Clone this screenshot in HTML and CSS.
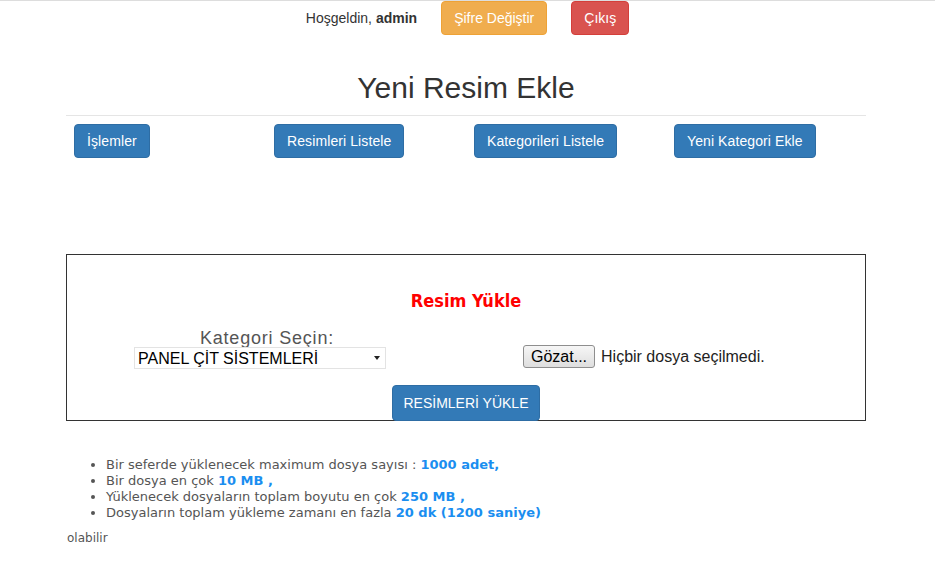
FILE: index.html
```html
<!DOCTYPE html>
<html lang="tr">
<head>
    <meta charset="UTF-8">
    <meta name="viewport" content="width=device-width, initial-scale=1.0">
    <title>Yeni Resim Ekle</title>
    <link rel="stylesheet" href="styles.css">
</head>
<body>
    <div class="top-bar">
        <span class="welcome">Hoşgeldin, <b>admin</b></span>
        <button class="btn btn-warning">Şifre Değiştir</button>
        <button class="btn btn-danger">Çıkış</button>
    </div>

    <div class="container">
        <h2 class="page-title">Yeni Resim Ekle</h2>
        <hr>

        <!-- Menü butonları -->
        <div class="menu-row">
            <div class="menu-col"><button class="btn btn-primary">İşlemler</button></div>
            <div class="menu-col"><button class="btn btn-primary">Resimleri Listele</button></div>
            <div class="menu-col"><button class="btn btn-primary">Kategorileri Listele</button></div>
            <div class="menu-col"><button class="btn btn-primary">Yeni Kategori Ekle</button></div>
        </div>

        <!-- Yükleme formu -->
        <div class="upload-box">
            <div class="upload-title">Resim Yükle</div>
            <div class="upload-row">
                <div class="upload-left">
                    <label for="kategori">Kategori Seçin:</label>
                    <div class="select-wrap">
                        <select id="kategori">
                            <option>PANEL ÇİT SİSTEMLERİ</option>
                            <option>BAHÇE TELLERİ</option>
                        </select>
                    </div>
                </div>
                <div class="upload-right">
                    <button class="file-btn">Gözat...</button>
                    <span class="file-text">Hiçbir dosya seçilmedi.</span>
                </div>
            </div>
            <div class="upload-submit">
                <button class="btn btn-primary">RESİMLERİ YÜKLE</button>
            </div>
        </div>

        <ul class="limits">
            <li>Bir seferde yüklenecek maximum dosya sayısı : <b>1000 adet,</b></li>
            <li>Bir dosya en çok <b>10 MB ,</b></li>
            <li>Yüklenecek dosyaların toplam boyutu en çok <b>250 MB ,</b></li>
            <li>Dosyaların toplam yükleme zamanı en fazla <b>20 dk (1200 saniye)</b></li>
        </ul>
        <p class="note">olabilir</p>
    </div>
</body>
</html>
```

FILE: styles.css
```css
body {
    margin: 0;
    font-family: "Liberation Sans", Arial, sans-serif;
    font-size: 14px;
    color: #333;
    background-color: #fff;
    border-top: 1px solid #ddd;
}
.btn {
    display: inline-block;
    padding: 6px 12px;
    font-family: "Liberation Sans", Arial, sans-serif;
    font-size: 14px;
    line-height: 20px;
    color: #fff;
    border: 1px solid transparent;
    border-radius: 4px;
    cursor: pointer;
}
.btn-primary {
    background-color: #337ab7;
    border-color: #2e6da4;
}
.btn-warning {
    background-color: #f0ad4e;
    border-color: #eea236;
}
.btn-danger {
    background-color: #d9534f;
    border-color: #d43f3a;
}
.top-bar {
    display: flex;
    justify-content: center;
    align-items: center;
    gap: 24px;
}
.welcome {
    margin-top: -1px;
}
.container {
    width: 800px;
    margin-left: 66px;
}
.page-title {
    margin: 35px 0 0;
    font-size: 30px;
    font-weight: 500;
    line-height: 36px;
    text-align: center;
}
hr {
    margin: 9px 0 8px;
    border: 0;
    border-top: 1px solid #e5e5e5;
}
.menu-row {
    display: grid;
    grid-template-columns: repeat(4, 1fr);
}
.menu-col {
    padding: 0 8px;
}
.menu-col .btn {
    letter-spacing: 0.1px;
}
.upload-box {
    margin-top: 96px;
    border: 1px solid #333;
    padding-top: 36px;
    height: 167px;
    box-sizing: border-box;
}
.upload-title {
    text-align: center;
    color: #f00;
    font-family: "DejaVu Sans Condensed", "DejaVu Sans", sans-serif;
    font-weight: bold;
    font-size: 18px;
    line-height: 20px;
}
.upload-row {
    display: grid;
    grid-template-columns: 400px 400px;
    align-items: end;
    margin-top: 19px;
}
.upload-left {
    text-align: center;
    padding-right: 14px;
}
.upload-left label {
    display: block;
    color: #555;
    font-size: 18px;
    letter-spacing: 0.8px;
    line-height: 17px;
    margin-left: 14px;
}
.select-wrap {
    position: relative;
    display: inline-block;
    width: 252px;
}
.select-wrap select {
    width: 100%;
    height: 22px;
    padding: 0 3px;
    font-family: "Liberation Sans", Arial, sans-serif;
    font-size: 16px;
    color: #000;
    background: #fff;
    border: 1px solid #e3e3e3;
    -webkit-appearance: none;
    appearance: none;
}
.select-wrap::after {
    content: "";
    position: absolute;
    right: 6px;
    top: 9px;
    border-left: 3px solid transparent;
    border-right: 3px solid transparent;
    border-top: 4px solid #222;
    pointer-events: none;
}
.upload-right {
    padding-left: 56px;
    display: flex;
    align-items: center;
    gap: 6px;
    padding-bottom: 1px;
}
.file-btn {
    height: 23px;
    padding: 0 7px;
    font-family: "Liberation Sans", Arial, sans-serif;
    font-size: 16px;
    color: #000;
    background: linear-gradient(#f6f6f6, #dedede);
    border: 1px solid #8e8e8e;
    border-radius: 3px;
}
.file-text {
    font-size: 16px;
    color: #222;
}
.upload-submit {
    text-align: center;
    margin-top: 16px;
}
.upload-submit .btn {
    padding: 7px 10px;
}
.limits {
    margin: 36px 0 0;
    padding-left: 40px;
    font-family: "DejaVu Sans", Verdana, sans-serif;
    font-size: 13px;
    line-height: 16px;
    color: #555;
}
.limits b {
    color: #1a8ef0;
}
.note {
    margin: 10px 0 0 1px;
    font-family: "DejaVu Sans", Verdana, sans-serif;
    font-size: 12px;
    color: #555;
}
```
